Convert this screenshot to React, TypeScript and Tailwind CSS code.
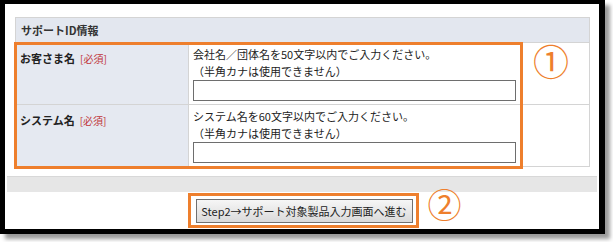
import React from "react";

const font = "font-['Meiryo','Noto_Sans_CJK_JP',sans-serif]";

type Field = {
  label: string;
  hint: string;
};

const fields: Field[] = [
  { label: "お客さま名", hint: "会社名／団体名を50文字以内でご入力ください。" },
  { label: "システム名", hint: "システム名を60文字以内でご入力ください。" },
];

function Row({ label, hint }: Field) {
  return (
    <div className="grid grid-cols-[172px_1fr] border-t border-[#d4d4d4]">
      <div className="h-[61px] bg-[#e5e9f1] pl-[4px] pt-[4px] leading-[18px]">
        <span className="text-[11px] font-bold text-[#222]">{label}</span>
        <span className="ml-[5px] text-[10px] text-[#c0353a]">[必須]</span>
      </div>
      <div className="border-l border-[#d4d4d4] pl-[4px] pt-[3px] text-[11px] leading-[17px] text-[#222]">
        <div>{hint}</div>
        <div>（半角カナは使用できません）</div>
        <input
          type="text"
          className="block h-[21px] w-[323px] border border-[#6e6e6e] bg-white"
        />
      </div>
    </div>
  );
}

export default function App() {
  return (
    <div className={`h-[242px] w-[613px] bg-white ${font}`}>
      <div className="flex h-[234px] w-[605px] flex-col border-b-[5px] border-l-[5px] border-r-[6px] border-t-[4px] border-black bg-white shadow-[5px_5px_4px_rgba(0,0,0,0.4)]">
        {/* テーブル */}
        <div className="relative ml-[10px] mt-[13px] w-[575px] border border-[#d4d4d4]">
          <div className="flex h-[24px] items-center bg-[#e3e7ef] pl-[5px] text-[11px] font-bold text-[#333]">
            サポートID情報
          </div>
          {fields.map((f) => (
            <Row key={f.label} {...f} />
          ))}

          {/* 注釈 */}
          <div className="absolute left-[-2px] top-[24px] h-[127px] w-[509px] border-[3px] border-[#ee7f2d]" />
          <span className="absolute left-[517px] top-[24px] text-[36px] leading-none text-[#ee7f2d]">
            ①
          </span>
        </div>

        <div className="mx-[2px] mt-[9px] h-[16px] border-t border-[#d8d8d8] bg-[#e6e6e6]" />

        <div className="flex flex-1 items-center justify-center">
          <div className="relative ml-[2px] border-[3px] border-[#ee7f2d] pb-[2px] pl-[5px] pr-[3px] pt-[3px]">
            <button className="flex h-[24px] w-[217px] items-center justify-center border border-[#707070] bg-gradient-to-b from-[#f6f6f6] to-[#dadada] text-[11px] text-[#222]">
              Step2→サポート対象製品入力画面へ進む
            </button>
            <span className="absolute left-[237px] top-[-9px] text-[34px] leading-none text-[#ee7f2d]">
              ②
            </span>
          </div>
        </div>
      </div>
    </div>
  );
}
